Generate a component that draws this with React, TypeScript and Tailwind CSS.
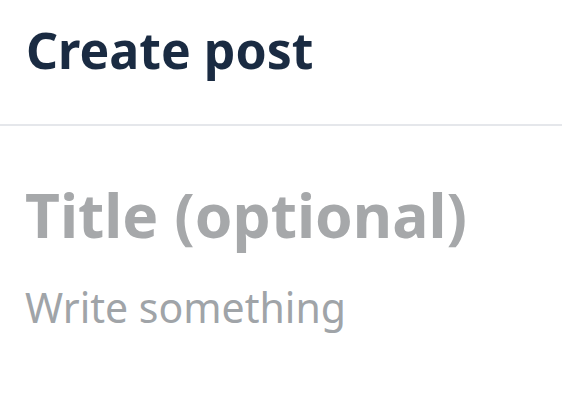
import React from "react";

export default function App() {
  return (
    <div className="w-[562px] h-[419px] bg-white overflow-hidden" style={{ fontFamily: '"Noto Sans", "Open Sans", sans-serif' }}>
      <div className="h-[126px] border-b-2 border-[#e5e7eb] pl-[26px] pt-[14px]">
        <h1 className="text-[50px] leading-[72px] font-bold text-[#1a2b42]">Create post</h1>
      </div>
      <div className="pl-[25px] pt-[49px]">
        <div className="text-[60.5px] leading-[80px] font-bold text-[#a6a8aa]">Title (optional)</div>
        <div className="text-[41px] leading-[56px] text-[#a0a4a8] mt-[24px]">Write something</div>
      </div>
    </div>
  );
}
